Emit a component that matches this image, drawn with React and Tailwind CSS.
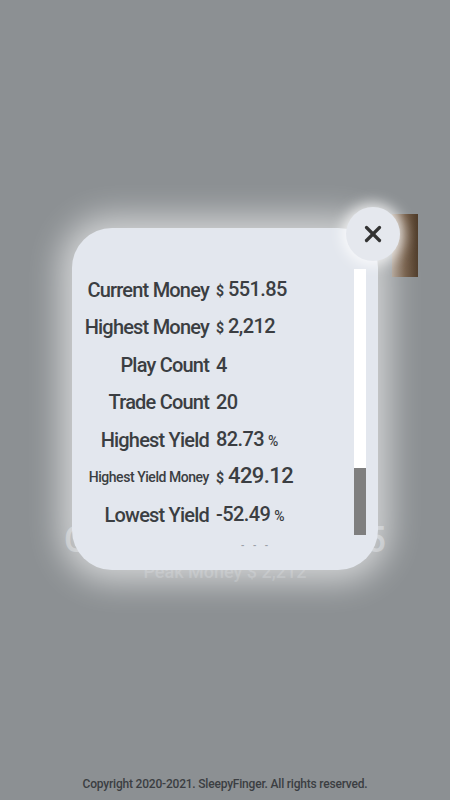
import { X } from "lucide-react";

const stats = [
  { label: "Current Money", prefix: "$", value: "551.85" },
  { label: "Highest Money", prefix: "$", value: "2,212" },
  { label: "Play Count", value: "4" },
  { label: "Trade Count", value: "20" },
  { label: "Highest Yield", value: "82.73", suffix: "%" },
  { label: "Highest Yield Money", prefix: "$", value: "429.12", small: true },
  { label: "Lowest Yield", value: "-52.49", suffix: "%" },
];

function StatRow({ stat }) {
  return (
    <div className="grid grid-cols-[137px_1fr] gap-[7px] items-center h-[37.5px] shrink-0">
      <div
        className={`text-right whitespace-nowrap leading-[24px] ${
          stat.small ? "text-[14px] tracking-[-0.45px]" : "text-[20px] tracking-[-0.8px]"
        }`}
      >
        {stat.label}
      </div>
      <div className="flex items-baseline whitespace-nowrap leading-[24px]">
        {stat.prefix && <span className="text-[14px] font-bold mr-[4px]">{stat.prefix}</span>}
        <span className={stat.small ? "text-[22px] tracking-[-0.6px]" : "text-[20px] tracking-[-0.6px]"}>
          {stat.value}
        </span>
        {stat.suffix && <span className="text-[14px] ml-[4px]">{stat.suffix}</span>}
      </div>
    </div>
  );
}

export default function App() {
  return (
    <div className="relative w-[450px] h-[800px] overflow-hidden bg-[#8c9093] font-['Roboto',sans-serif] font-medium text-[#3b3e42]">
      {/* game screen behind the popup */}
      <div className="flex flex-col h-full">
        <div className="flex justify-end pr-[32px] pt-[214px]">
          <div className="w-[26px] h-[63px] bg-gradient-to-r from-[#9b8a7a] via-[#6e5640] to-[#4f3c2a]" />
        </div>
        <div className="flex justify-between px-[64px] mt-[243px] text-[36px] leading-[40px] text-[#b0b4b8]">
          <span>Cash</span>
          <span>$ 551.85</span>
        </div>
        <div className="text-center text-[18px] leading-[24px] text-[#9ea2a6]">Peak Money $ 2,212</div>
        <div className="mt-auto mb-[7px] text-center text-[12px] tracking-[-0.2px] text-[#3b3e42]">
          Copyright 2020-2021. SleepyFinger. All rights reserved.
        </div>
      </div>

      {/* stats popup */}
      <div className="absolute left-[72px] top-[228px] w-[306px] h-[342px] rounded-[40px] bg-[#e3e7ee] shadow-[0_0_32px_12px_rgba(255,255,255,0.6)]">
        <div className="flex pt-[43px]">
          <div className="flex flex-col h-[282px] w-[282px] overflow-hidden">
            {stats.map((s) => (
              <StatRow key={s.label} stat={s} />
            ))}
            <div className="pl-[169px] mt-[6px] text-[10px] leading-[12px] tracking-[3px] text-[#9aa0a8]">- - -</div>
          </div>
          <div className="mt-[-2px] w-[12px] h-[266px] flex flex-col bg-white">
            <div className="mt-auto h-[67px] bg-[#7f7f7f]" />
          </div>
        </div>
      </div>

      <button className="absolute left-[346px] top-[207px] w-[54px] h-[54px] rounded-full bg-[#e5e8ee] shadow-[0_0_14px_4px_rgba(255,255,255,0.8)] flex items-center justify-center">
        <X size={26} strokeWidth={3} className="text-[#333]" />
      </button>
    </div>
  );
}
